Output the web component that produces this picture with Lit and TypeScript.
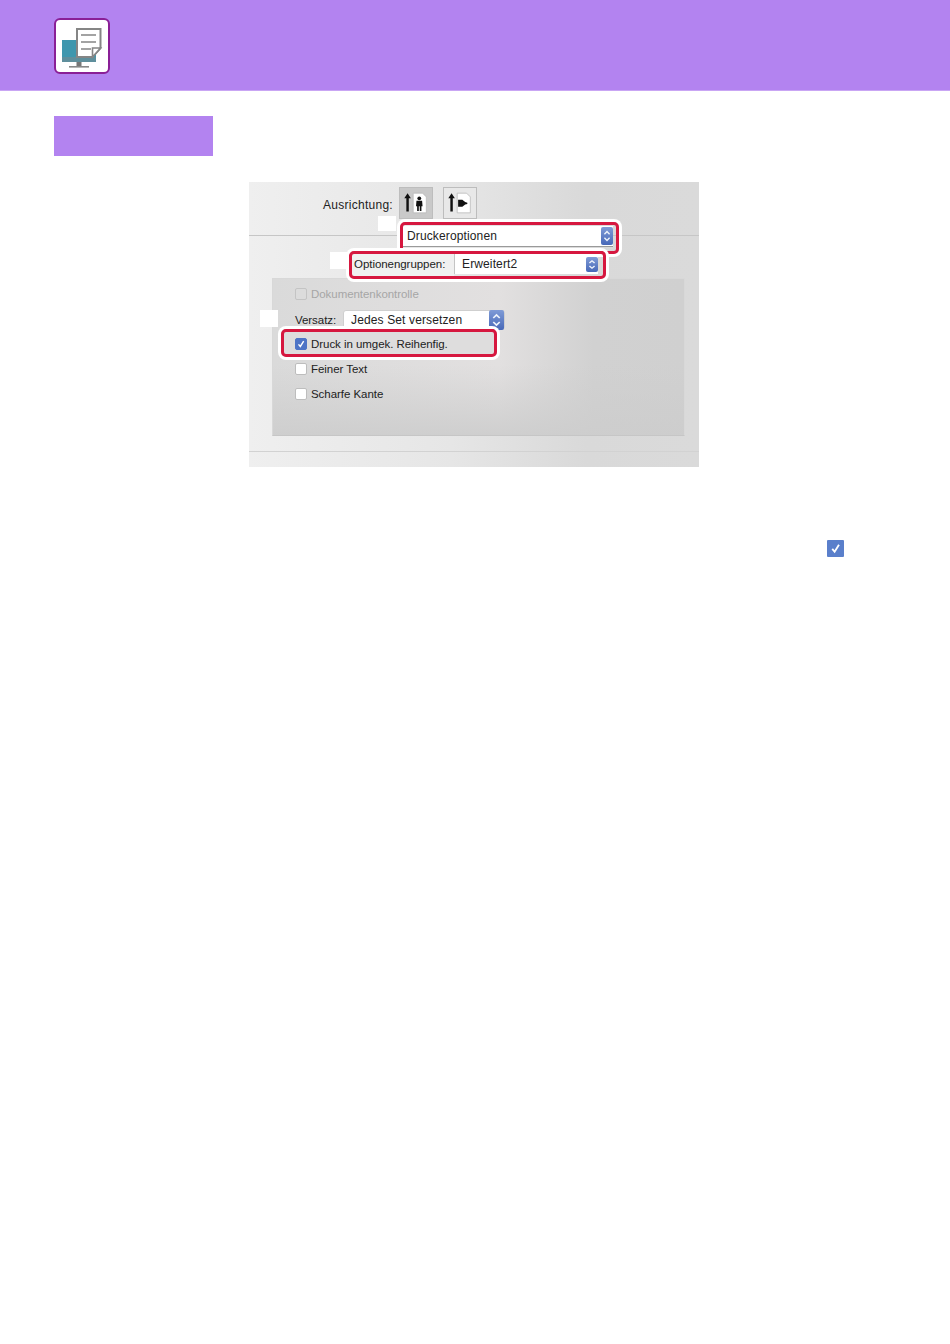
import { LitElement, html, css, svg } from "lit";
import { customElement } from "lit/decorators.js";

const stepper = svg`<svg viewBox="0 0 14 20" width="100%" height="100%" preserveAspectRatio="none"><path d="M4 8l3-3 3 3M4 12l3 3 3-3" fill="none" stroke="#eef3fb" stroke-width="1.6"/></svg>`;
const tick = svg`<svg viewBox="0 0 12 12" width="100%" height="100%"><path d="M3 6.4l2.2 2.6L9.2 2.6" fill="none" stroke="#fff" stroke-width="1.7"/></svg>`;

@customElement("app-root")
export class AppRoot extends LitElement {
  static styles = css`
    :host { display: block; width: 950px; height: 1344px; background: #fff; font-family: "Liberation Sans", Arial, sans-serif; overflow: hidden; }
    .band { background: #b383f0; border-bottom: 1px solid #c9a6f4; padding: 18px 0 0 54px; box-sizing: border-box; height: 91px; }
    .tile { width: 56px; height: 56px; box-sizing: border-box; background: #fff; border: 2px solid #8a1f96; border-radius: 6px; display: block; }
    .tile svg { display: block; width: 52px; height: 52px; }
    .step { width: 159px; height: 40px; margin: 25px 0 0 54px; background: #b383f0; }
    .shot { position: relative; width: 450px; height: 285px; margin: 26px 0 0 249px; overflow: hidden; color: #222; font-size: 11.5px; white-space: nowrap;
      background: linear-gradient(90deg, #efefef, #e6e6e6 45%, #d9d9d9 75%, #dadada); }
    .shot > * { position: absolute; }
    .rule { left: 0; right: 0; height: 1px; background: #c6c6c6; }
    .rule.r1 { top: 53px; }
    .rule.r2 { top: 269px; background: #d2d2d2; }
    .panel { left: 23px; top: 96px; width: 413px; height: 158px; box-sizing: border-box; border: 1px solid #d8d8d8; border-bottom-color: #c6c6c6;
      background: linear-gradient(180deg, rgba(205,205,205,0) 55%, rgba(205,205,205,.9) 100%), linear-gradient(90deg, #dadada, #e2e0e0 55%, #d1d1d1 78%, #d0d0d0); }
    .orient { left: 74px; top: 16px; font-size: 12px; letter-spacing: .27px; }
    .ob { top: 5px; width: 34px; height: 32px; box-sizing: border-box; border: 1px solid #bdbdbd; background: #e8e8e8; }
    .ob.on { left: 150px; background: #c9c9c9; }
    .ob.off { left: 194px; }
    .ob svg { width: 100%; height: 100%; display: block; }
    .mask { background: #fff; }
    .outline { box-sizing: border-box; border: 3px solid #d6173f; border-radius: 5px; box-shadow: 0 0 0 3px #fff; }
    .select { display: flex; align-items: center; box-sizing: border-box; background: #fff; border-bottom: 1px solid #9a9a9a; font-size: 12px; letter-spacing: .13px; }
    .select .lbl { flex: 1; padding-left: 4px; }
    .stepper { width: 12px; height: 18px; border-radius: 2px; background: linear-gradient(180deg, #7f9bd6, #4768b8); flex: none; }
    .s1 { left: 154px; top: 44px; width: 210px; height: 21px; }
    .s2 { left: 205px; top: 72px; width: 144px; height: 20px; border-bottom: none; border-left: 1px solid #c4c4c4; }
    .s2 .lbl { padding-left: 7px; }
    .s2 .stepper { height: 15px; }
    .s3 { left: 94px; top: 128px; width: 162px; height: 20px; border-radius: 3px; border: 1px solid #cfcfcf; }
    .s3 .lbl { padding-left: 7px; }
    .s3 .stepper { width: 15px; height: 20px; }
    .gbox { left: 103px; top: 72px; width: 102px; height: 22px; background: #f0f0f0; }
    .label { font-size: 11.5px; letter-spacing: -.05px; }
    .label.off { color: #a6a6a6; }
    .check { width: 12px; height: 12px; box-sizing: border-box; border-radius: 2px; background: #fff; border: 1px solid #bdbdbd; }
    .check.dis { background: #dcdcdc; border-color: #c4c4c4; }
    .check.on { background: #4e74c6; border-color: #4e74c6; }
    .check svg { display: block; width: 100%; height: 100%; }
    .hilite { left: 35px; top: 150px; width: 210px; height: 22px; background: #dedddd; }
    .mark { display: block; width: 17px; height: 17px; margin: 73px 0 0 827px; border-radius: 1px; background: #5a7fcb; padding: 2px; box-sizing: border-box; }
    .mark svg { display: block; width: 100%; height: 100%; }
    .m1 { left: 129px; top: 34px; width: 18px; height: 15px; }
    .m2 { left: 81px; top: 70px; width: 18px; height: 17px; }
    .m3 { left: 11px; top: 128px; width: 18px; height: 17px; }
    .o1 { left: 151px; top: 40px; width: 219px; height: 32px; }
    .o2 { left: 100px; top: 69px; width: 257px; height: 28px; }
    .o3 { left: 32px; top: 147px; width: 216px; height: 28px; }
    .c0 { left: 46px; top: 106px; }
    .c1 { left: 46px; top: 156px; }
    .c2 { left: 46px; top: 181px; }
    .c3 { left: 46px; top: 206px; }
    .t0 { left: 62px; top: 106px; }
    .t1 { left: 62px; top: 156px; }
    .t2 { left: 62px; top: 181px; }
    .t3 { left: 62px; top: 206px; }
    .tv { left: 46px; top: 132px; }
    .tg { left: 105px; top: 76px; }
  `;

  private person(land: boolean) {
    return svg`<svg viewBox="0 0 34 32">
      <path d="M8 5.500l-3.500 5.500h2.200v14h2.600V11h2.200z" fill="#111"/>
      <path d="M14 5.500h10l4 4v17H14z" fill="#fff" stroke="#b5b5b5" stroke-width=".8"/>
      ${land
        ? svg`<path d="M15 12.500h4.500l3 2.500 2.300.6v1.400l-2.300.6-3 2.500H15z" fill="#111"/>`
        : svg`<circle cx="20.500" cy="11" r="2" fill="#111"/><path d="M17.500 13.500h6l.5 6h-1.200v5H21v-5h-1v5h-1.800v-5H17z" fill="#111"/>`}
    </svg>`;
  }

  render() {
    return html`
      <div class="band">
        <div class="tile">
          <svg viewBox="0 0 52 52">
            <rect x="6" y="20" width="34" height="22" fill="#3f97ae"/>
            <rect x="6" y="37" width="34" height="5" fill="#5f8f9c"/>
            <rect x="20.500" y="42" width="5" height="4" fill="#777"/>
            <rect x="13" y="46" width="20" height="1.600" fill="#888"/>
            <path d="M21 9h23.500v19l-8 9H21z" fill="#fff" stroke="#858585" stroke-width="2"/>
            <path d="M25 15h15M25 22h15M25 29h10" stroke="#858585" stroke-width="1.600"/>
            <path d="M36.500 37v-9h8l-8 9z" fill="#fff" stroke="#858585" stroke-width="1.600"/>
          </svg>
        </div>
      </div>
      <div class="step"></div>
      <div class="shot">
        <div class="rule r1"></div>
        <div class="panel"></div>
        <div class="rule r2"></div>

        <span class="orient">Ausrichtung:</span>
        <div class="ob on">${this.person(false)}</div>
        <div class="ob off">${this.person(true)}</div>

        <div class="mask m1"></div>
        <div class="mask m2"></div>
        <div class="mask m3"></div>

        <div class="select s1"><span class="lbl">Druckeroptionen</span><span class="stepper">${stepper}</span></div>
        <div class="outline o1"></div>

        <div class="gbox"></div>
        <span class="label tg">Optionengruppen:</span>
        <div class="select s2"><span class="lbl">Erweitert2</span><span class="stepper">${stepper}</span></div>
        <div class="outline o2"></div>

        <div class="check dis c0"></div>
        <span class="label off t0">Dokumentenkontrolle</span>

        <span class="label tv">Versatz:</span>
        <div class="select s3"><span class="lbl">Jedes Set versetzen</span><span class="stepper">${stepper}</span></div>

        <div class="hilite"></div>
        <div class="check on c1">${tick}</div>
        <span class="label t1">Druck in umgek. Reihenfig.</span>
        <div class="outline o3"></div>

        <div class="check c2"></div>
        <span class="label t2">Feiner Text</span>
        <div class="check c3"></div>
        <span class="label t3">Scharfe Kante</span>
      </div>
      <div class="mark">${tick}</div>
    `;
  }
}
